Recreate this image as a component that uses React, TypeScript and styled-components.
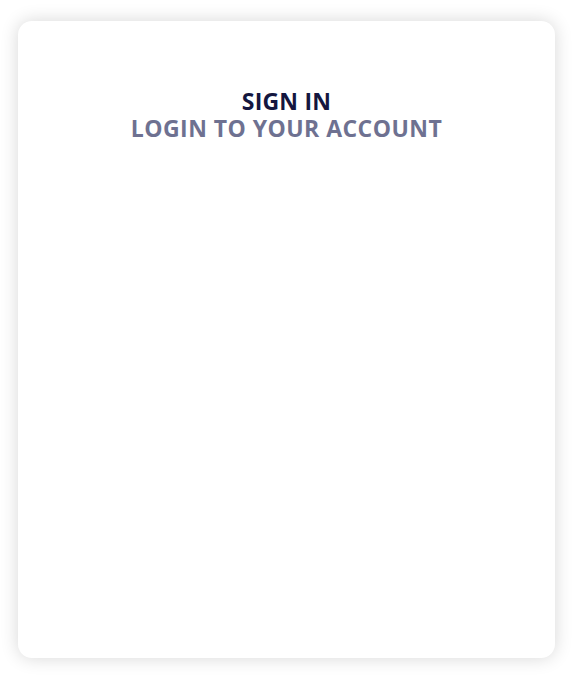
import React from 'react';
import styled, { createGlobalStyle } from 'styled-components';

const GlobalStyle = createGlobalStyle`
  html, body {
    margin: 0;
    padding: 0;
    background: #ffffff;
    font-family: 'Open Sans', 'Liberation Sans', sans-serif;
  }
`;

const Page = styled.div`
  padding: 21px 23px 24px 18px;
`;

const Card = styled.div`
  width: 537px;
  height: 637px;
  box-sizing: border-box;
  background: #ffffff;
  border-radius: 14px;
  box-shadow: 0 0 18px rgba(0, 0, 0, 0.16);
  padding-top: 67px;
  display: flex;
  flex-direction: column;
  align-items: center;
`;

const Title = styled.h1<{ $muted?: boolean }>`
  margin: 0;
  font-size: 23px;
  line-height: 27px;
  font-weight: 700;
  letter-spacing: ${(p) => (p.$muted ? '0.45px' : '0.2px')};
  color: ${(p) => (p.$muted ? '#6e7191' : '#14163f')};
`;

export default function App() {
  return (
    <>
      <GlobalStyle />
      <Page>
        <Card>
          <Title>SIGN IN</Title>
          <Title as="h2" $muted>
            LOGIN TO YOUR ACCOUNT
          </Title>
        </Card>
      </Page>
    </>
  );
}
